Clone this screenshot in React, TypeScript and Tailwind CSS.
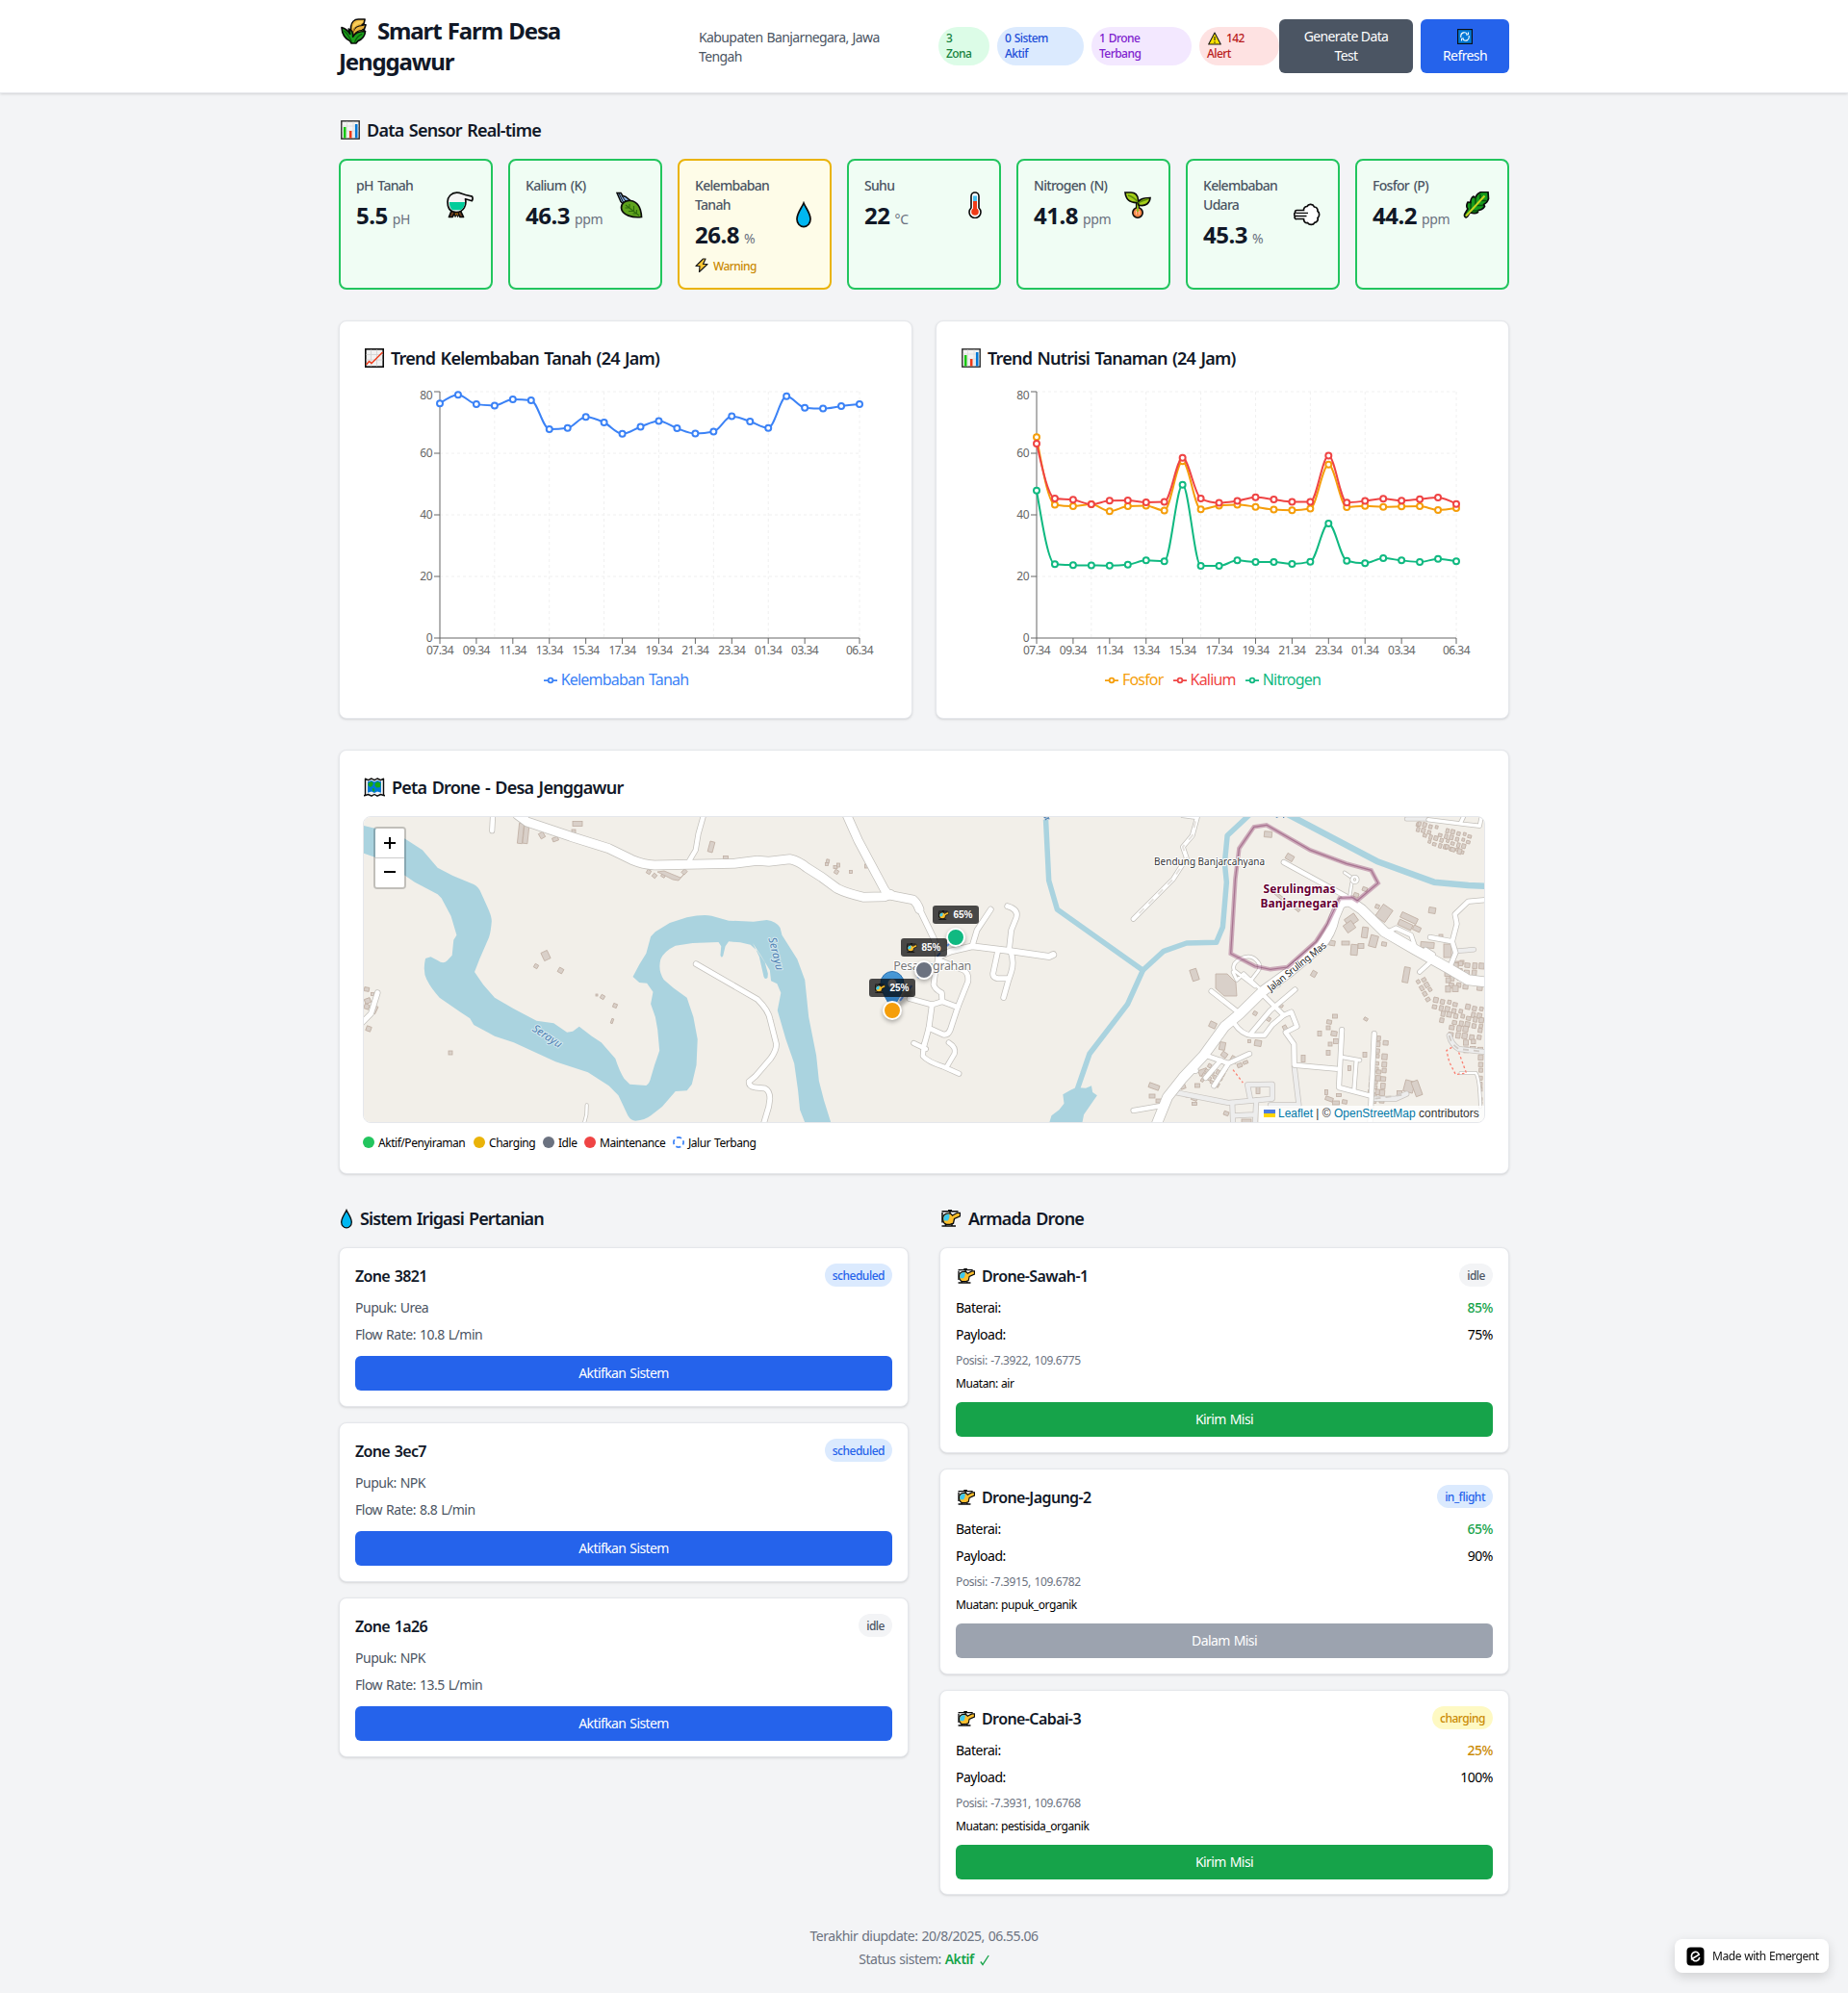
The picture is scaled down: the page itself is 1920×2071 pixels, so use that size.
import React from "react";

/* ---------- Icons ---------- */

type IconProps = { className?: string };
const K = "#0b0b0b";

const Wheat = ({ className }: IconProps) => (
  <svg viewBox="0 0 28 28" className={className} fill="none" strokeLinejoin="round">
    <path d="M13 26C11.500 20 10.500 14 11 9c.5-4.500 3.500-8 8-8h7l-1 4.500-2 1.500h4l-1.500 4.500-2 1h2l-2 4-7.500 2.500-2 6z" fill="#e9b13c" stroke={K} strokeWidth="1.700" />
    <path d="M12.500 11C13 6 15.500 2.500 24.500 2.500L23 5.500c-4 .5-7 1.500-9 6z" fill="#f9cf5a" />
    <path d="M13.500 14.500C15 9.500 18 7.500 24.500 7.800M15 17.500c1.500-3 3.500-4.500 8-4.500" stroke={K} strokeWidth="1.200" />
    <path d="M13.500 26C13 19 13 14 15 10" stroke="#a8781e" strokeWidth="1.300" />
    <path d="M1 10c4.500 1 7 3.500 9 7 0-2.500-.8-3.500-1.500-5.500 3 1 5 4.500 4.700 8.500C15 16 20 14 26.500 14c-.5 6-4 9-8 10.500L16.500 27h-5l-1.500-2.500C5 22 1.500 18 1 10z" fill="#1c9f1c" stroke={K} strokeWidth="1.700" />
    <path d="M3.500 13.500c4 3 6 7 8.500 12M15 26c1.500-4.500 4-7.500 8-9" stroke="#0a5c0a" strokeWidth="1.200" />
  </svg>
);

const BarChart = ({ className }: IconProps) => (
  <svg viewBox="0 0 20 20" className={className} fill="none">
    <rect x="0.800" y="0.800" width="18.400" height="18.400" fill="#f3f3f3" stroke="#2a2a2a" strokeWidth="1.400" />
    <path d="M1.500 6h17M1.500 11h17M6.500 1.500v17M13 1.500v17" stroke="#dcdcdc" strokeWidth="0.800" />
    <path d="M4.200 18.500V7" stroke="#16c60c" strokeWidth="2.600" />
    <path d="M10.200 18.500V11" stroke="#f03a17" strokeWidth="2.600" />
    <path d="M16.200 18.500V4" stroke="#0078d7" strokeWidth="2.600" />
  </svg>
);

const TrendChart = ({ className }: IconProps) => (
  <svg viewBox="0 0 20 20" className={className} fill="none">
    <rect x="0.800" y="0.800" width="18.400" height="18.400" fill="#f1f1f1" stroke={K} strokeWidth="1.600" />
    <path d="M1.500 6.500h17M1.500 12h17M6.500 1.500v17M12.500 1.500v17" stroke="#d2d2d2" strokeWidth="0.900" />
    <path d="M1.500 17l3-3.500 2.500 2L18.500 4" stroke="#f03a17" strokeWidth="1.400" />
  </svg>
);

const Alembic = ({ className }: IconProps) => (
  <svg viewBox="0 0 28 28" className={className} fill="none" strokeLinejoin="round">
    <path d="M5.500 19l-3 7.500h3.500l3-5M14 19l3.500 7.500h-3.500l-3-5" fill="#6b3f23" stroke={K} strokeWidth="1.700" />
    <path d="M8 22l1 4.500 1.200-3 1.300 3 1-4.500z" fill="#f4900c" stroke={K} strokeWidth="1" />
    <path d="M10.500 1.200c4 0 6 1.600 9 2.300l7 1.700c.8 1.300.7 3-.2 4.500L19.500 7.800c1.500 6-1.500 13.700-9.500 13.700S1 15.500 1 10.500 5 1.200 10.500 1.200z" fill="#f4f4f4" stroke={K} strokeWidth="1.700" />
    <path d="M2.800 11h16.200c0 4-2 7-4.500 8.300H6C3.800 17.500 2.800 14.500 2.800 11z" fill="#00cc9a" />
  </svg>
);

const Feather = ({ className }: IconProps) => (
  <svg viewBox="0 0 28 28" className={className} fill="none">
    <path d="M1 1.500l4 9 4 4 6-5-5-4-3-1-2-3z" fill="#8ab4e8" stroke={K} strokeWidth="1.500" />
    <path d="M3 2l5 10M6 4.500l5 7" stroke={K} strokeWidth="1" />
    <path d="M5.500 17C5.500 12 10 9 15 9.500c6 .8 11 6 11.500 17C18 27.500 6 25 5.500 17z" fill="#5fa31e" stroke={K} strokeWidth="1.700" />
    <path d="M10 14l14 11M14 13v4H9.500M18.500 15v5.500h-5.500M21.500 19v4H17.500" stroke="#2d6a0d" strokeWidth="1.100" />
  </svg>
);

const Drop = ({ className }: IconProps) => (
  <svg viewBox="0 0 18 28" className={className} fill="none">
    <path d="M9 2c2 5 7 10.500 7 16.500A7 7.800 0 0 1 9 26.600a7 7.800 0 0 1-7-8.100C2 12.500 7 7 9 2z" fill="#00b7f1" stroke={K} strokeWidth="1.700" />
  </svg>
);

const Thermometer = ({ className }: IconProps) => (
  <svg viewBox="0 0 14 28" className={className} fill="none">
    <path d="M3 17V5a4 4 0 0 1 8 0v12a6 6 0 1 1-8 0z" fill="#fff" stroke={K} strokeWidth="1.600" />
    <path d="M7 20V4.500" stroke="#4cc2f1" strokeWidth="4" />
    <path d="M7 20v-10" stroke="#f03a17" strokeWidth="4" />
    <circle cx="7" cy="21" r="3.800" fill="#f03a17" />
  </svg>
);

const Sprout = ({ className }: IconProps) => (
  <svg viewBox="0 0 28 28" className={className} fill="none">
    <path d="M14 22V12M14 14c3-2 5-2.500 8-3" stroke={K} strokeWidth="4.200" />
    <ellipse cx="14" cy="22" rx="5.200" ry="5.200" fill="#f7894a" stroke={K} strokeWidth="1.600" />
    <path d="M14 21V12" stroke="#8cbd18" strokeWidth="1.800" />
    <path d="M1 1h6c5 0 7 3 7.500 7.500l-.3 3C7 12 2 10 1 1zM14.500 13c0-4 3-6.500 12.500-6.500-.5 6-5 8.500-10 8-2 0-2.500-.5-2.500-1.500z" fill="#a4cf1b" stroke={K} strokeWidth="1.700" />
    <path d="M4 4c4 1 7 3 10 7M14.500 12c3-2 6-3 10-4" stroke="#5c8c0a" strokeWidth="1.300" />
    <path d="M12.500 20v4M15.500 20v4" stroke="#ffc39a" strokeWidth="1" />
  </svg>
);

const Wind = ({ className }: IconProps) => (
  <svg viewBox="0 0 28 24" className={className} fill="none">
    <path
      d="M10.500 7.500H3A1.500 1.500 0 0 0 2.300 10.300A1.600 1.600 0 0 0 2 13.500A1.600 1.600 0 0 0 3 16.500H10.500C10.500 19.500 12.500 21 14.500 20.500C16.500 23.300 20.500 23 21.800 20.300C24.500 20 25.700 17.500 25 15.500C27.300 13.500 27 9.800 25 8.500C25.300 6 23.500 3.800 21.500 4C20 .8 15.500 .5 14 3.500C12 3.500 10.300 5 10.500 7.500z"
      fill="#fff"
      stroke={K}
      strokeWidth="1.700"
    />
    <path d="M2.500 10.400H15M2.500 13.500H13.500" stroke={K} strokeWidth="1.300" />
  </svg>
);

const Herb = ({ className }: IconProps) => (
  <svg viewBox="0 0 28 28" className={className} fill="none">
    <path d="M3 27c-2-1-2-2-1-4l3-5c-2-2-1-5 0-7 1 0 2 0 3 1-.5-3 1-6 3-7l2 2c.500-3 3-5.500 6-6.500h7l.5 7c-1 3-3 5-5 6l1 2c-2 3-5 4-7 4l0 2c-3 2-6 1-8 0L4.500 26z" fill="#159a1c" stroke={K} strokeWidth="1.700" strokeLinejoin="round" />
    <path d="M8 20V12M8 20h8M13 14V6M13 14.500h8M18 9V3M18 9.500h6" stroke="#084f0c" strokeWidth="1.500" />
    <path d="M3 25.500L22.500 4.500" stroke="#c8d420" strokeWidth="2" />
  </svg>
);

const Bolt = ({ className }: IconProps) => (
  <svg viewBox="0 0 14 16" className={className} fill="none">
    <path d="M8.500 1L1 8.500h4L4.500 14.500 13 6.500H8.500L11 1z" fill="#fdc834" stroke="#1b1b1b" strokeWidth="1.200" strokeLinejoin="round" />
  </svg>
);

const Warn = ({ className }: IconProps) => (
  <svg viewBox="0 0 14 14" className={className} fill="none">
    <path d="M7 1L13.300 13H.700z" fill="#fce100" stroke="#1b1b1b" strokeWidth="1.100" strokeLinejoin="round" />
    <path d="M7 5v4M7 10.300v1.400" stroke="#1b1b1b" strokeWidth="1.100" />
  </svg>
);

const RefreshBox = ({ className }: IconProps) => (
  <svg viewBox="0 0 16 16" className={className} fill="none">
    <rect x="0.600" y="0.600" width="14.800" height="14.800" fill="#0078d7" stroke={K} strokeWidth="1.100" />
    <path d="M3.800 9V7a3.500 3.500 0 0 1 6.500-1.500M12.200 7v2a3.500 3.500 0 0 1-6.500 1.500" stroke="#fff" strokeWidth="1.100" />
    <path d="M11.500 3.500V6H9M4.500 12.500V10H7" stroke="#fff" strokeWidth="1" />
  </svg>
);

const MapIcon = ({ className }: IconProps) => (
  <svg viewBox="0 0 22 20" className={className} fill="none">
    <path d="M1.500 1.200l3 1.500L8 1l3 1.700L14 1l3.500 1.700 3-1.500v16.600l1 1-4-1.300-3.500 1.700-3-1.700-3 1.700-3.500-1.700-4 1.300 1-1z" fill="#f2f2f2" stroke={K} strokeWidth="1.400" strokeLinejoin="round" />
    <path d="M4 4.300L8 3l3 1.500L14 3l4 1.300v11.400L14 14.500 11 16l-3-1.500-4 1.200z" fill="#0078d7" />
    <path d="M4.500 6L8 4l2 2-1.500 3-2 1-2-2zM8.500 11.500l2-.5 1 2.500-1.500 1.500zM11.500 6l3-1.800L17.500 6l-.5 4-3.500.500-2-2z" fill="#16a815" />
  </svg>
);

const Heli = ({ className }: IconProps) => (
  <svg viewBox="0 0 20 18" className={className} fill="none">
    <path d="M0.500 1.800h17M7 .6h4" stroke={K} strokeWidth="1.500" />
    <path d="M1 3v10.500M9 1.500v3" stroke={K} strokeWidth="1.500" />
    <path d="M11.500 6l5-2.700h3v3.500L13.500 9.500l-1 4.700-3.500 1.200H5C3 14.500 1.500 12 1.600 9S4 3.800 8 3.800c1.800 0 2.800.8 3.500 2.200z" fill="#fdbf2d" stroke={K} strokeWidth="1.300" />
    <path d="M2.400 9C2.500 6.200 4.500 4.600 8.200 4.600c.6 2.600.3 4.900-1.500 6.800H3c-.5-.7-.6-1.500-.6-2.400z" fill="#3cc8f0" />
    <path d="M0.500 16.900h14.500M4.500 14.800v2M11 14.800v2" stroke={K} strokeWidth="1.500" />
  </svg>
);

/* ---------- Header ---------- */

const Header = () => (
  <header className="h-[97px] border-b border-gray-200 bg-white shadow-sm">
    <div className="mx-auto flex w-[1216px] items-center pt-4">
      <h1 className="w-[374px] text-2xl leading-8 font-bold tracking-[-0.047em] text-gray-900 [word-spacing:0.05em]">
        <span className="flex items-center">
          <Wheat className="mr-[11px] ml-[2px] size-[27px]" />
          Smart Farm Desa
        </span>
        Jenggawur
      </h1>
      <p className="w-[249px] pt-[2px] text-sm leading-5 tracking-[-0.043em] text-gray-600 [word-spacing:0.07em]">
        Kabupaten Banjarnegara, Jawa
        <br />
        Tengah
      </p>
      <div className="flex gap-2 text-xs leading-4 font-[550] tracking-[-0.046em] [word-spacing:0.07em]">
        <span className="w-[53px] rounded-full bg-green-100 px-2 py-1 text-green-700">
          3<br />Zona
        </span>
        <span className="w-[90px] rounded-full bg-blue-100 px-2 py-1 text-blue-700">
          0 Sistem
          <br />
          Aktif
        </span>
        <span className="w-[104px] rounded-full bg-purple-100 px-2 py-1 text-purple-700">
          1 Drone
          <br />
          Terbang
        </span>
        <span className="w-[83px] rounded-full bg-red-100 px-2 py-1 text-red-700">
          <span className="flex items-center gap-[5px]">
            <Warn className="ml-[1px] size-[14px]" />
            142
          </span>
          Alert
        </span>
      </div>
      <div className="flex gap-2 text-center text-sm leading-5 tracking-[-0.043em] text-white [word-spacing:0.07em]">
        <button className="h-14 w-[139px] rounded-md bg-gray-600">
          Generate Data
          <br />
          Test
        </button>
        <button className="flex h-14 w-[92px] flex-col items-center rounded-md bg-blue-600 pt-2">
          <span className="flex h-5 items-center">
            <RefreshBox className="size-4" />
          </span>
          Refresh
        </button>
      </div>
    </div>
  </header>
);

/* ---------- Sensors ---------- */

type Sensor = {
  label: string[];
  value: string;
  unit: string;
  Icon: (p: IconProps) => React.ReactElement;
  size: string;
  warn?: boolean;
};

const sensors: Sensor[] = [
  { label: ["pH Tanah"], value: "5.5", unit: "pH", Icon: Alembic, size: "size-[28px] mr-[2px]" },
  { label: ["Kalium (K)"], value: "46.3", unit: "ppm", Icon: Feather, size: "size-[28px] mr-[2px]" },
  { label: ["Kelembaban", "Tanah"], value: "26.8", unit: "%", Icon: Drop, size: "h-[28px] w-[18px] mr-[2px]", warn: true },
  { label: ["Suhu"], value: "22", unit: "°C", Icon: Thermometer, size: "h-[28px] w-[14px] mr-[2px]" },
  { label: ["Nitrogen (N)"], value: "41.8", unit: "ppm", Icon: Sprout, size: "size-[28px] mr-[2px]" },
  { label: ["Kelembaban", "Udara"], value: "45.3", unit: "%", Icon: Wind, size: "h-[24px] w-[28px] mr-[2px]" },
  { label: ["Fosfor (P)"], value: "44.2", unit: "ppm", Icon: Herb, size: "size-[28px] mr-[2px]" },
];

const SensorCard = ({ label, value, unit, Icon, size, warn }: Sensor) => (
  <div
    className={
      "h-[136px] rounded-lg border-2 p-4 " +
      (warn ? "border-[#eab308] bg-[#fefce8]" : "border-[#22c55e] bg-[#f0fdf4]")
    }
  >
    <div className="flex items-center justify-between">
      <div className="whitespace-nowrap">
        <p className="text-sm leading-5 font-[550] tracking-[-0.05em] text-gray-600 [word-spacing:0.12em]">
          {label.map((l) => (
            <span key={l} className="block">
              {l}
            </span>
          ))}
        </p>
        <p className="mt-[5px] -mb-px text-2xl leading-8 font-bold tracking-[-0.02em] text-gray-900">
          {value}
          <span className="ml-[5px] text-sm font-normal tracking-[-0.025em] text-gray-500">{unit}</span>
        </p>
      </div>
      <Icon className={"relative top-[2px] flex-none " + size} />
    </div>
    {warn && (
      <div className="mt-2 flex items-center gap-[5px] text-xs leading-4 font-[550] tracking-[-0.045em] text-yellow-600">
        <Bolt className="h-4 w-[14px]" />
        <span className="pt-[2px]">Warning</span>
      </div>
    )}
  </div>
);

/* ---------- Charts ---------- */

type Series = { name: string; color: string; data: number[] };

const moisture: Series[] = [
  {
    name: "Kelembaban Tanah",
    color: "#3b82f6",
    data: [76.2, 79, 75.9, 75.5, 77.5, 77.2, 67.8, 68.2, 71.8, 70, 66.3, 68.6, 70.5, 68.1, 66.4, 67, 72, 70.3, 68.2, 78.5, 74.8, 74.5, 75.3, 75.9],
  },
];

const nutrients: Series[] = [
  {
    name: "Fosfor",
    color: "#f59e0b",
    data: [65.2, 43.3, 42.8, 43.4, 41.2, 42.8, 43, 41.4, 57.4, 41.8, 43, 43.3, 42.6, 41.7, 41.5, 42, 56.3, 42.5, 42.9, 42.6, 42.7, 42.8, 41.6, 42.2],
  },
  {
    name: "Kalium",
    color: "#ef4444",
    data: [63.1, 45.3, 44.9, 43.4, 44.6, 44.7, 44.1, 44.2, 58.5, 45.3, 43.9, 44.5, 45.7, 45, 44.2, 44.2, 59.2, 44, 44.5, 45.2, 44.6, 45.1, 45.6, 43.5],
  },
  {
    name: "Nitrogen",
    color: "#10b981",
    data: [47.9, 24, 23.7, 23.6, 23.5, 23.8, 25.2, 24.9, 49.8, 23.4, 23.4, 25.2, 24.7, 24.7, 24.1, 24.8, 37.2, 25.1, 24.3, 25.9, 25.2, 24.7, 25.7, 24.9],
  },
];

const X0 = 80;
const X1 = 516;
const Y0 = 261;
const Y1 = 5;
const px = (i: number) => X0 + ((X1 - X0) * i) / 23;
const py = (v: number) => Y0 - ((Y0 - Y1) * v) / 80;

/* Monotone cubic interpolation in x */
function monotone(data: number[]) {
  const p = data.map((v, i) => [px(i), py(v)]);
  const n = p.length;
  const h = p[1][0] - p[0][0];
  const s = p.slice(1).map((q, i) => (q[1] - p[i][1]) / h);
  const t: number[] = new Array(n).fill(0);
  for (let i = 1; i < n - 1; i++) {
    const a = s[i - 1];
    const b = s[i];
    t[i] = (Math.sign(a) + Math.sign(b)) * Math.min(Math.abs(a), Math.abs(b), 0.5 * Math.abs((a + b) / 2)) || 0;
  }
  t[0] = (3 * s[0] - t[1]) / 2;
  t[n - 1] = (3 * s[n - 2] - t[n - 2]) / 2;
  let d = `M${p[0][0]},${p[0][1]}`;
  for (let i = 0; i < n - 1; i++) {
    d += `C${p[i][0] + h / 3},${p[i][1] + (t[i] * h) / 3},${p[i + 1][0] - h / 3},${p[i + 1][1] - (t[i + 1] * h) / 3},${p[i + 1][0]},${p[i + 1][1]}`;
  }
  return d;
}

const xTicks: [number, string][] = [
  [0, "07.34"], [2, "09.34"], [4, "11.34"], [6, "13.34"], [8, "15.34"], [10, "17.34"],
  [12, "19.34"], [14, "21.34"], [16, "23.34"], [18, "01.34"], [20, "03.34"], [23, "06.34"],
];

const Chart = ({ series }: { series: Series[] }) => (
  <div>
    <svg width="546" height="288" viewBox="0 0 546 288" className="block overflow-visible">
      <g stroke="#f0f0f0" strokeDasharray="3 3">
        {[20, 40, 60, 80].map((v) => (
          <path key={v} d={`M${X0} ${py(v)}H${X1}`} />
        ))}
        {[3, 6, 9, 12, 15, 18, 23].map((i) => (
          <path key={i} d={`M${px(i)} ${Y1}V${Y0}`} />
        ))}
      </g>
      <g stroke="#666">
        <path d={`M${X0} ${Y1}V${Y0}`} />
        <path d={`M${X0} ${Y0}H${X1}`} />
        {[0, 20, 40, 60, 80].map((v) => (
          <path key={v} d={`M${X0 - 6} ${py(v)}H${X0}`} />
        ))}
        {xTicks.map(([i]) => (
          <path key={i} d={`M${px(i)} ${Y0}v6`} />
        ))}
      </g>
      <g fill="#666" fontSize="12" letterSpacing="-0.5">
        {[0, 20, 40, 60].map((v) => (
          <text key={v} x="72" y={py(v) + 4.300} textAnchor="end">
            {v}
          </text>
        ))}
        <text x="72" y="13.300" textAnchor="end">80</text>
        {xTicks.map(([i, l]) => (
          <text key={i} x={px(i)} y="278.300" textAnchor="middle">
            {l}
          </text>
        ))}
      </g>
      {series.map((s) => (
        <g key={s.name} stroke={s.color} strokeWidth="2">
          <path d={monotone(s.data)} fill="none" />
          {s.data.map((v, i) => (
            <circle key={i} cx={px(i)} cy={py(v)} r="3" fill="#fff" />
          ))}
        </g>
      ))}
    </svg>
    <div className="mr-[20px] ml-[10px] flex h-[31px] items-center justify-center text-base tracking-[-0.05em] [word-spacing:0.08em]">
      {series.map((s) => (
        <span key={s.name} className="mr-[10px] flex items-center gap-1" style={{ color: s.color }}>
          <svg width="14" height="14" viewBox="0 0 32 32" fill="none" stroke="currentColor" strokeWidth="4" className="mt-[2px]">
            <path d="M0 16h10.667a5.333 5.333 0 1 1 10.667 0H32M21.333 16a5.333 5.333 0 1 1-10.667 0" />
          </svg>
          {s.name}
        </span>
      ))}
    </div>
  </div>
);

/* ---------- Map ---------- */

const RIVER =
  "M95,264L125,272L160,285L205,305L250,340L290,395L330,420L385,447Q398,455 404,473L420,515Q432,545 432,562Q430,595 425,612L400,680L387,720L410,760L440,800L490,835L550,872L595,880L630,908L645,905L662,890L695,920L720,940L757,990Q768,1030 780,1052L795,1070L838,1074Q848,1065 850,1050L860,1010L873,965L868,900L862,860L850,820L856,782L840,755L820,753L803,735L820,697L838,662L850,610L862,595L900,567L945,550Q985,540 1010,545L1055,560L1120,563L1155,558Q1180,562 1190,582L1195,605L1235,680L1255,745L1265,860L1285,980L1292,1060L1305,1120L1324,1192L1256,1192L1242,1150L1237,1090L1227,1005L1205,930L1183,840L1192,785L1182,757L1166,748L1163,715L1140,670L1118,630L1135,672L1147,735Q1150,745 1157,738L1158,725L1150,690L1130,655L1112,635L1085,628L1055,625L1046,640L1040,670Q1036,678 1033,668L1035,640L1028,627L960,630L915,638Q885,655 876,680Q868,715 885,745L910,770L945,800L962,860L973,930L970,1010L958,1070L945,1090L915,1092L880,1140L850,1168Q835,1182 810,1184Q798,1184 790,1168L765,1105L740,1075L685,1033L600,1000L490,940L440,920L385,885L375,865L350,845L295,800Q272,770 262,745Q250,720 258,678L272,673L290,684Q305,697 315,685L328,668L332,620L340,605L325,545L300,490L290,478L230,440L205,420L125,362L95,350Z";

type Road = [string, number, number]; // path, casing width, group

const roads: Road[] = [
  ["M435,235L433,280", 6, 0],
  ["M988,235L975,290L968,340L952,372", 6, 0],
  ["M969,695L1130,805Q1160,840 1164,870L1180,945Q1180,965 1165,990L1125,1045L1108,1062Q1108,1078 1125,1080L1150,1083Q1163,1090 1163,1115L1160,1140L1147,1192", 6.500, 0],
  ["M682,1135L681,1165L675,1192", 4, 0],
  ["M132,785L115,850L90,880", 6.500, 0],
  ["M190,30L255,42Q278,50 288,78L330,165L345,215", 7, 1],
  ["M345,222L385,205L450,190L560,203L690,222L703,216", 7.500, 1],
  ["M450,190L465,140L508,75", 6.500, 1],
  ["M560,65Q595,75 588,100L572,140L565,203", 6.500, 1],
  ["M530,205L515,275Q515,288 530,290L560,290", 6.500, 1],
  ["M570,205Q582,240 572,270L562,300L548,350", 6.500, 1],
  ["M345,222L350,235L425,265Q440,275 437,300L405,380L382,450Q375,468 360,465L315,445", 6.500, 1],
  ["M345,225L335,270L330,310Q335,325 355,335L357,362", 6.500, 1],
  ["M255,353L325,372L357,362L405,380", 6.500, 1],
  ["M325,372L315,445L300,500", 6.500, 1],
  ["M0,945L-3,982Q10,1000 50,1015L92,1037", 6, 2],
  ["M-27,942L5,960M65,940Q85,955 80,975L60,1015", 6, 2],
  ["M945,378L1110,485", 6, 2],
  ["M1105,410L1122,424M1118,488L1124,442", 4, 2],
  ["M680,232L718,238L705,295L680,330L690,365L655,430L550,555", 5.500, 2],
  ["M870,765L815,715Q808,695 830,680Q860,660 878,690Q888,705 875,722L860,745M885,775L840,725L822,745L812,720", 4.500, 2],
  ["M755,780L825,845", 6, 2],
  ["M975,775L910,840L860,910M890,790L945,855L965,845L980,890L950,908L972,945L973,1010L1085,1022", 6, 2],
  ["M815,880Q835,915 860,917L895,917L915,885L945,855", 6, 2],
  ["M1098,900L1090,1080L1170,1105M1183,912L1172,1192", 6, 2],
  ["M1095,985L1145,995M1136,995L1130,1090", 5, 2],
  ["M740,980L800,1005L855,975M780,995L740,1050M800,1005L762,1075", 6, 2],
  ["M550,1152L620,1138", 6, 2],
  ["M1480,495L1430,500L1395,540L1400,570L1388,625L1330,612M1388,625L1397,660L1385,695", 6, 2],
  ["M1225,592L1240,583L1280,605L1290,640M1318,650L1338,665L1330,690L1302,720", 5.500, 2],
  ["M1325,245L1460,265L1465,235M1410,255L1418,235", 5, 2],
  ["M1410,1035L1450,1035Q1460,1050 1462,1140", 4, 2],
  ["M500,230L525,252L640,298L740,335L800,370Q830,385 860,387L950,385L1070,382L1130,373L1160,376L1215,368Q1240,375 1260,395L1300,425L1340,460Q1365,475 1410,487L1465,485L1480,478", 10.500, 0],
  ["M1365,230L1395,310L1465,465L1475,480L1540,495Q1550,505 1556,525", 10, 0],
  ["M612,1192L640,1110L680,1050L735,980L790,890L830,850L890,780L960,720L1040,640Q1070,600 1078,550L1092,510Q1105,495 1122,502L1150,525L1210,595L1290,650L1380,710L1430,745L1480,752", 11.500, 2],
  ["M890,775L930,760M690,1030L715,1028", 6, 2],
];

const greyRoads: Road[] = [
  ["M650,1093L800,1128L915,1115L915,1070L850,1072L858,1120", 6, 2],
  ["M810,1128L812,1192M873,1120L870,1192M815,1168L870,1165M910,1135L985,1135L973,1015", 6, 2],
  ["M1180,1115L1240,1115L1268,1100", 6, 2],
  ["M1400,655L1445,650", 5.500, 2],
  ["M1380,918Q1385,945 1405,960L1480,970", 6, 2],
  ["M1268,243L1320,243", 5, 2],
];

const groups = [
  "translate(-37 -78) scale(.39541 .33333)",
  "translate(483 72) scale(.33333)",
  "translate(583 -78) scale(.39541 .33333)",
];

/* x, y, width, height, rotation */
const buildings: [number, number, number, number, number][] = [
  [164, 18, 5, 21, 6], [169.500, 18, 5, 21, 6], [223, 8, 10, 5, 0], [219, 16, 4, 4, 0], [186, 20, 5, 6, -30], [200, 24, 6, 4, -20],
  [362, 32, 5, 11, 15], [377, 43, 5, 3, 0], [297, 58, 4, 4, 30], [303, 62, 4, 4, 40], [312, 62, 4, 3, 30], [334, 58, 5, 4, -45],
  [483, 47, 3, 4, 10], [482, 50, 3, 3, 0], [491, 53, 4, 3, 0], [494, 51, 3, 4, 0], [492, 58, 4, 4, 30], [507, 58, 3, 3, 0], [523, 52, 3, 4, 0],
  [190, 145, 7, 9, -25], [180, 156, 4, 4, 30], [205.500, 160.500, 5, 5, 30], [249, 188, 4, 4, 30], [243, 186, 2, 2, 0], [262, 197, 4, 4, 20], [259, 213, 2, 5, 20],
  [4, 180, 5, 4, 10], [5, 192, 6, 5, -20], [4, 198, 5, 5, 20], [12, 201, 5, 8, 25], [10, 185, 3, 3, 0], [6, 221, 5, 5, 20], [91, 246, 4, 4, 0],
  [940.500, 19, 8, 6, 5], [963, 43, 8, 6, 30], [953, 84, 14, 3, 40], [970, 96, 8, 3, 40], [1041, 76, 5, 4, 20], [1032, 82, 5, 4, 20],
  [864, 165, 7, 12, -18], [1061, 101, 12, 15, 35], [1054, 94, 4, 4, 20], [1111, 98, 7, 6, 10], [1087, 106, 18, 6, 25], [1083, 113, 15, 6, 25], [1095, 117, 8, 5, 25],
  [1027, 108, 12, 9, -35], [1025, 115, 10, 9, -35], [1041, 121, 6, 11, 8], [1050, 130, 8, 12, 15], [1007, 132, 6, 5, 10], [1021, 132, 8, 4, 0], [1030, 139, 7, 11, 5], [1037, 135, 6, 5, 0], [1061, 133, 5, 4, 10],
  [1106, 134, 14, 6, 5], [1127, 140, 8, 14, 0], [1120, 125, 4, 4, 0], [1084, 165, 6, 16, 10], [988, 164, 5, 6, 30], [1134, 155, 8, 8, 0], [1142, 152, 4, 4, 0],
  [883, 217, 7, 6, 25], [927, 205, 4, 4, 30], [941, 211, 4, 4, 30], [954, 197, 4, 3, 30], [930, 236, 7, 6, 10], [921, 234, 3, 3, 0], [958, 220, 4, 5, -30],
  [893, 239, 6, 8, 10], [895, 248, 6, 5, 35], [905, 253, 7, 6, 30], [911, 259, 5, 4, -20], [917, 256, 5, 3, -20],
  [977, 252, 4, 7, 0], [1010, 208, 5, 4, 0], [1004, 214, 5, 4, 10], [1003, 220, 4, 4, 0], [994, 226, 4, 5, 0], [1009, 226, 6, 5, 10], [1011, 234, 5, 5, 0], [1005, 237, 4, 4, 0], [1003, 246, 4, 5, 0], [1042, 211, 4, 3, 30], [1025, 262, 3, 5, 0], [1041, 248, 4, 5, 0],
  [873, 266, 9, 6, -20], [867, 280, 5, 4, 0], [822, 281, 11, 5, 20], [820, 291, 6, 4, 0], [827, 296, 6, 4, 0], [852, 281, 5, 5, -20], [864, 293, 6, 5, 20], [857, 290, 4, 4, 0], [864, 299, 5, 3, 0], [897, 309, 5, 4, 20], [930, 285, 4, 7, 0], [918, 317, 10, 4, 0],
  [1001, 287, 3, 5, 0], [1004, 294, 8, 4, 20], [1011, 298, 7, 4, 0], [1020, 297, 5, 4, 10], [1014, 290, 5, 3, 0], [1087, 281, 10, 12, 15], [1095, 283, 7, 16, -20], [1077, 288, 5, 5, 0],
];

/* Dense housing blocks: x, y, columns, rows, step, rotation */
const blocks: [number, number, number, number, number, number][] = [
  [1089, 4, 2, 1, 6, 16],
  [1096, 5, 10, 2, 6, 14],
  [1102, 17, 8, 2, 6, 16],
  [1124, 29, 4, 1, 7, 16],
  [879, 256, 2, 4, 6, 28],
  [893, 252, 2, 5, 6, 28],
  [1053, 228, 1, 11, 6.500, 4],
  [1060, 232, 1, 9, 7.500, 4],
  [1046, 262, 2, 4, 7, 4],
  [1130, 150, 5, 4, 7.500, 5],
  [1113, 188, 8, 2, 6.800, 12],
  [1120, 202, 7, 2, 6.800, 10],
  [1129, 216, 5, 2, 7.300, 8],
  [1093, 172, 2, 4, 6.600, -30],
  [1143, 232, 3, 2, 7.500, 0],
  [1159, 248, 1, 5, 7, 2],
  [1160, 282, 1, 4, 5, 0],
  [1124, 152, 2, 4, 8, 0],
];

const Housing = () => (
  <g fill="#d9d0c9" stroke="#c0afa3" strokeWidth="0.800">
    {buildings.map(([x, y, w, h, r], i) => (
      <rect key={i} x={x - w / 2} y={y - h / 2} width={w} height={h} transform={`rotate(${r} ${x} ${y})`} />
    ))}
    {blocks.map(([x, y, c, n, s, r], b) => (
      <g key={b} transform={`rotate(${r} ${x} ${y})`}>
        {Array.from({ length: c * n }, (_, k) => {
          const j = (k * 7 + b * 3) % 5;
          if ((k * 11 + b) % 9 === 0) return null;
          return (
            <rect
              key={k}
              x={x + (k % c) * s + j * 0.3}
              y={y + Math.floor(k / c) * s + ((j * 3) % 4) * 0.4}
              width={s - 2 - j * 0.3}
              height={s - 1.500 - ((j * 2) % 3) * 0.7}
            />
          );
        })}
      </g>
    ))}
    <path d="M306,58L313,57L330,64L334,60L328,67L322,66Z" />
    <path d="M886,164L898,164L907,173L908,187L895,187L886,179Z" />
  </g>
);

const Roads = ({ list, color, casing }: { list: Road[]; color: string; casing: string }) => (
  <g fill="none" strokeLinecap="round" strokeLinejoin="round">
    {list.map(([d, w, g], i) => (
      <path key={i} d={d} transform={groups[g]} vectorEffect="non-scaling-stroke" stroke={casing} strokeWidth={w} />
    ))}
    {list.map(([d, w, g], i) => (
      <path key={i} d={d} transform={groups[g]} vectorEffect="non-scaling-stroke" stroke={color} strokeWidth={w - 1.500} />
    ))}
  </g>
);

const ZOO = "M900,262L1015,340L1110,382L1175,403L1193,443L1138,498L1125,488L1092,490L1060,570L1030,625L955,705L910,712L870,702L806,663L818,430L828,335L867,268Z";

const MapTiles = () => (
  <svg viewBox="1 1 1164 317" width="1164" height="317" className="block bg-[#f2efe9]">
    <path d={RIVER} transform={groups[0]} fill="#aad3df" />
    <g transform={groups[2]} fill="none" stroke="#aad3df" strokeLinejoin="round">
      <path vectorEffect="non-scaling-stroke" strokeWidth="5.500" d="M320,245L328,435L350,525L575,715L535,820L435,975L403,1085" />
      <path vectorEffect="non-scaling-stroke" strokeWidth="5.500" d="M857,228L797,295L790,380L795,440L785,580L768,628L690,630L630,655L575,715" />
      <path vectorEffect="non-scaling-stroke" strokeWidth="6.500" d="M955,228L1190,375L1340,440L1430,450L1480,453" />
      <path fill="#aad3df" stroke="none" d="M365,1102L385,1088L400,1080L425,1082L440,1075L443,1095L455,1105L440,1130L420,1165L415,1195L328,1195L335,1168L355,1150L368,1130Z" />
    </g>
    <Housing />
    <Roads list={greyRoads} color="#ededed" casing="#c9c5c0" />
    <Roads list={roads} color="#ffffff" casing="#c3c0bb" />
    <circle cx="1030.500" cy="66" r="3" fill="#f2efe9" stroke="#c3c0bb" strokeWidth="4" />
    <circle cx="1030.500" cy="66" r="3" fill="none" stroke="#fff" strokeWidth="2.500" />
    <g fill="none" transform={groups[2]}>
      <path vectorEffect="non-scaling-stroke" d="M713,250L705,295L680,330L690,365L655,430L555,550" stroke="#e6e3df" strokeWidth="2" strokeDasharray="7 7" />
      <path vectorEffect="non-scaling-stroke" d="M1380,918Q1385,945 1405,960L1480,970M1185,1115L1265,1102" stroke="#cfcac5" strokeWidth="1.800" strokeDasharray="6 5" />
      <path vectorEffect="non-scaling-stroke" d="M1387,955L1373,965L1380,1000L1397,1040L1425,1035L1405,970M812,1025L838,1065" stroke="#fa8072" strokeWidth="1.300" strokeDasharray="2.500 2.500" />
      <path vectorEffect="non-scaling-stroke" d={ZOO} stroke="#8d3a6b" strokeOpacity=".38" strokeWidth="4.500" />
      <path vectorEffect="non-scaling-stroke" d={ZOO} stroke="#7d3060" strokeOpacity=".45" strokeWidth="1.200" />
      <path vectorEffect="non-scaling-stroke" d="M315,238L330,243M318,246L328,238M925,238L932,235M945,235V240" stroke="#4d80b3" strokeWidth="1.200" />
    </g>
    <g fontFamily="'Noto Sans', sans-serif" paintOrder="stroke" stroke="#ffffff" strokeWidth="2" strokeLinejoin="round" textAnchor="middle">
      <text fill="#4d80b3" fontSize="11.500" fontStyle="italic" textLength="34" transform="translate(189.500 232) rotate(33)" stroke="#d5e9ef">Serayu</text>
      <text fill="#4d80b3" fontSize="11.500" fontStyle="italic" textLength="35" transform="translate(425.500 144) rotate(76)" stroke="#d5e9ef">Serayu</text>
      <text x="591.800" y="160" fill="#777777" fontSize="12.500" textLength="81">Pesanggrahan</text>
      <text x="879.600" y="51" fill="#333333" fontSize="10" textLength="115">Bendung Banjarcahyana</text>
      <text x="973" y="80" fill="#660033" fontSize="12" fontWeight="700" textLength="75">Serulingmas</text>
      <text x="973" y="94.500" fill="#660033" fontSize="12" fontWeight="700" textLength="81">Banjarnegara</text>
      <text fill="#222222" fontSize="10" textLength="75" strokeWidth="1.500" transform="translate(972.500 159) rotate(-39)">Jalan Sruling Mas</text>
    </g>
    <path d="M550 202L583 160L615.700 125.700" fill="none" stroke="#3b82f6" strokeWidth="2" strokeDasharray="5 10" strokeOpacity=".8" strokeDashoffset="2" />
    <defs>
      <linearGradient id="pin" x1="0" y1="0" x2="0" y2="1">
        <stop offset="0" stopColor="#4a9bd8" />
        <stop offset="1" stopColor="#2a70b2" />
      </linearGradient>
      <filter id="soft" x="-50%" y="-50%" width="200%" height="200%">
        <feGaussianBlur stdDeviation="2" />
      </filter>
    </defs>
    <path d="M551 202L561 181Q570 176 572 183Q570 192 551 202Z" fill="#000" fillOpacity=".35" filter="url(#soft)" />
    <path d="M550 202C545.500 192 538 183 538 173.500A12 12 0 0 1 562 173.500C562 183 554.500 192 550 202Z" fill="url(#pin)" stroke="#2b6fae" />
    <circle cx="550" cy="174" r="4.500" fill="#fff" />
  </svg>
);

const drones = [
  { pct: "65%", dot: "left-[605px] top-[115px] bg-[#10b981]", tag: "left-[591px] top-[92px]" },
  { pct: "85%", dot: "left-[572px] top-[149px] bg-[#6b7280]", tag: "left-[558px] top-[126px]" },
  { pct: "25%", dot: "left-[539px] top-[191px] bg-[#f59e0b]", tag: "left-[525px] top-[168px]" },
];

const DroneMap = () => (
  <div className="relative h-[319px] w-[1166px] overflow-hidden rounded-lg border border-gray-200">
    <MapTiles />
    {drones.map((d) => (
      <div key={d.pct}>
        <span className={"absolute size-5 rounded-full border-2 border-white shadow-[0_2px_4px_rgba(0,0,0,0.3)] " + d.dot} />
        <span
          className={
            "absolute flex h-[19px] w-12 items-center justify-center gap-[4px] rounded-[3px] bg-black/70 font-['Liberation_Sans'] text-[10px] font-bold text-white " +
            d.tag
          }
        >
          <Heli className="h-[10px] w-[11px]" />
          {d.pct}
        </span>
      </div>
    ))}
    <div className="absolute top-[10px] left-[10px] w-[34px] rounded-[4px] border-2 border-black/20 bg-clip-padding">
      <div className="flex h-[31px] items-center justify-center rounded-t-[2px] border-b border-[#ccc] bg-white">
        <svg width="14" height="14" viewBox="0 0 14 14" stroke="#000" strokeWidth="2">
          <path d="M7 1v12M1 7h12" />
        </svg>
      </div>
      <div className="flex h-[30px] items-center justify-center rounded-b-[2px] bg-white">
        <svg width="14" height="14" viewBox="0 0 14 14" stroke="#000" strokeWidth="2">
          <path d="M1 6h12" />
        </svg>
      </div>
    </div>
    <div className="absolute right-0 bottom-0 flex h-[17px] w-[234px] items-center bg-white/80 pb-px pl-[5px] font-['Liberation_Sans'] text-xs whitespace-pre text-[#333]">
      <svg width="12" height="8" viewBox="0 0 12 8" className="mr-[3px]">
        <path fill="#4c7be1" d="M0 0h12v4H0z" />
        <path fill="#ffd500" d="M0 4h12v4H0z" />
      </svg>
      <span className="text-[#0078a8]">Leaflet</span> | © <span className="text-[#0078a8]">OpenStreetMap</span> contributors
    </div>
  </div>
);

const mapLegend = [
  { label: "Aktif/Penyiraman", dot: "bg-green-500", w: "w-[107px]" },
  { label: "Charging", dot: "bg-yellow-500", w: "w-[64px]" },
  { label: "Idle", dot: "bg-gray-500", w: "w-[35px]" },
  { label: "Maintenance", dot: "bg-red-500", w: "w-[84px]" },
];

/* ---------- Irrigation and drones ---------- */

const badge: Record<string, string> = {
  scheduled: "bg-blue-100 text-blue-600",
  in_flight: "bg-blue-100 text-blue-600",
  idle: "bg-gray-100 text-gray-600",
  charging: "bg-yellow-100 text-yellow-600",
};

const Badge = ({ status }: { status: string }) => (
  <span className={"flex h-6 items-center rounded-full px-2 pt-px text-xs font-[550] tracking-[-0.041em] " + badge[status]}>{status}</span>
);

const zones = [
  { name: "Zone 3821", status: "scheduled", pupuk: "Urea", flow: "10.8" },
  { name: "Zone 3ec7", status: "scheduled", pupuk: "NPK", flow: "8.8" },
  { name: "Zone 1a26", status: "idle", pupuk: "NPK", flow: "13.5" },
];

const fleet = [
  { name: "Drone-Sawah-1", status: "idle", bat: "85%", batCls: "text-green-600", load: "75%", pos: "-7.3922, 109.6775", cargo: "air", btn: "Kirim Misi", btnCls: "bg-green-600", h: "h-[214px]" },
  { name: "Drone-Jagung-2", status: "in_flight", bat: "65%", batCls: "text-green-600", load: "90%", pos: "-7.3915, 109.6782", cargo: "pupuk_organik", btn: "Dalam Misi", btnCls: "bg-gray-400", h: "h-[214px]" },
  { name: "Drone-Cabai-3", status: "charging", bat: "25%", batCls: "text-yellow-600", load: "100%", pos: "-7.3931, 109.6768", cargo: "pestisida_organik", btn: "Kirim Misi", btnCls: "bg-green-600", h: "h-[213px]" },
];

const card = "rounded-lg border border-gray-200 bg-white shadow-sm";
const heading = "flex h-7 items-center text-lg leading-7 font-semibold tracking-[-0.043em] text-gray-900 [word-spacing:0.08em]";
const action = "flex h-9 w-full items-center justify-center rounded-md text-sm tracking-[-0.043em] text-white [word-spacing:0.07em]";

export default function App() {
  return (
    <div
      className="min-h-[2071px] bg-[#f3f4f6] text-black [--color-blue-100:#dbeafe] [--color-blue-600:#2563eb] [--color-blue-700:#1d4ed8] [--color-gray-100:#f3f4f6] [--color-gray-200:#e5e7eb] [--color-gray-400:#9ca3af] [--color-gray-500:#6b7280] [--color-gray-600:#4b5563] [--color-gray-900:#111827] [--color-green-100:#dcfce7] [--color-green-500:#22c55e] [--color-green-600:#16a34a] [--color-green-700:#15803d] [--color-purple-100:#f3e8ff] [--color-purple-700:#7e22ce] [--color-red-100:#fee2e2] [--color-red-500:#ef4444] [--color-red-700:#b91c1c] [--color-yellow-100:#fef9c3] [--color-yellow-500:#eab308] [--color-yellow-600:#ca8a04]"
      style={{ fontFamily: "'Noto Sans', 'Open Sans', sans-serif" }}
    >
      <Header />
      <main className="mx-auto w-[1216px] pt-6">
        <h2 className={heading}>
          <BarChart className="mr-[7px] ml-[2px] size-5" />
          Data Sensor Real-time
        </h2>
        <section className="mt-4 grid grid-cols-7 gap-4">
          {sensors.map((s) => (
            <SensorCard key={s.label.join(" ")} {...s} />
          ))}
        </section>

        <section className="mt-8 grid grid-cols-2 gap-6">
          <div className={card + " h-[414px] p-6"}>
            <h3 className={heading + " mb-4"}>
              <TrendChart className="mr-[7px] ml-[2px] size-5" />
              Trend Kelembaban Tanah (24 Jam)
            </h3>
            <Chart series={moisture} />
          </div>
          <div className={card + " h-[414px] p-6"}>
            <h3 className={heading + " mb-4"}>
              <BarChart className="mr-[7px] ml-[2px] size-5" />
              Trend Nutrisi Tanaman (24 Jam)
            </h3>
            <Chart series={nutrients} />
          </div>
        </section>

        <section className={card + " mt-8 p-6"}>
          <h3 className={heading + " mb-4"}>
            <MapIcon className="mr-[7px] ml-[1px] h-5 w-[22px]" />
            Peta Drone - Desa Jenggawur
          </h3>
          <DroneMap />
          <div className="mt-3 flex h-4 items-center gap-2 text-xs leading-4 tracking-[-0.038em] whitespace-nowrap">
            {mapLegend.map((l) => (
              <span key={l.label} className={"flex items-center gap-1 " + l.w}>
                <i className={"size-3 flex-none rounded-full " + l.dot} />
                <span className="pt-[2px]">{l.label}</span>
              </span>
            ))}
            <span className="flex items-center gap-1">
              <svg width="12" height="12" viewBox="0 0 12 12" fill="none" stroke="#3b82f6" strokeWidth="1.700">
                <circle cx="6" cy="6" r="5.100" strokeDasharray="5.200 2.800" strokeDashoffset="2.600" />
              </svg>
              <span className="pt-[2px] [word-spacing:0.1em]">Jalur Terbang</span>
            </span>
          </div>
        </section>

        <section className="mt-8 grid grid-cols-2 items-start gap-8">
          <div>
            <h2 className={heading}>
              <Drop className="mr-[7px] ml-[1px] h-[21px] w-[14px]" />
              <span className="tracking-[-0.05em]">Sistem Irigasi Pertanian</span>
            </h2>
            <div className="mt-4 flex flex-col gap-4">
              {zones.map((z) => (
                <div key={z.name} className={card + " p-4"}>
                  <div className="mb-3 flex h-6 items-center justify-between">
                    <h4 className="pt-px text-base leading-6 font-semibold tracking-[-0.042em] text-gray-900 [word-spacing:0.08em]">{z.name}</h4>
                    <Badge status={z.status} />
                  </div>
                  <p className="mb-2 text-sm leading-5 tracking-[-0.035em] text-gray-600 [word-spacing:0.06em]">Pupuk: {z.pupuk}</p>
                  <p className="mb-3 text-sm leading-5 tracking-[-0.035em] text-gray-600 [word-spacing:0.06em]">Flow Rate: {z.flow} L/min</p>
                  <button className={action + " bg-blue-600"}>Aktifkan Sistem</button>
                </div>
              ))}
            </div>
          </div>

          <div>
            <h2 className={heading}>
              <Heli className="mr-[8px] ml-[2px] h-[18px] w-5" />
              Armada Drone
            </h2>
            <div className="mt-4 flex flex-col gap-4">
              {fleet.map((d) => (
                <div key={d.name} className={card + " p-4 " + d.h}>
                  <div className="mb-3 flex h-6 items-center justify-between">
                    <h4 className="flex items-center pt-px text-base leading-6 font-semibold tracking-[-0.037em] text-gray-900">
                      <Heli className="mr-[7px] ml-[2px] h-4 w-[18px]" />
                      {d.name}
                    </h4>
                    <Badge status={d.status} />
                  </div>
                  <div className="mb-2 flex justify-between text-sm leading-5 tracking-[-0.035em]">
                    <span>Baterai:</span>
                    <span className={"font-[550] " + d.batCls}>{d.bat}</span>
                  </div>
                  <div className="mb-2 flex justify-between text-sm leading-5 tracking-[-0.035em]">
                    <span>Payload:</span>
                    <span>{d.load}</span>
                  </div>
                  <p className="mb-2 pt-px text-xs leading-4 tracking-[-0.032em] text-gray-500 [word-spacing:0.07em]">Posisi: {d.pos}</p>
                  <p className="mb-[11px] text-xs leading-4 tracking-[-0.036em] [word-spacing:0.05em]">Muatan: {d.cargo}</p>
                  <button className={action + " " + d.btnCls}>{d.btn}</button>
                </div>
              ))}
            </div>
          </div>
        </section>

        <footer className="mt-8 text-center text-sm leading-5 tracking-[-0.034em] text-gray-500 [word-spacing:0.05em]">
          <p className="pt-px">Terakhir diupdate: 20/8/2025, 06.55.06</p>
          <p className="mt-1">
            Status sistem: <span className="font-semibold text-green-600">Aktif</span>{" "}
            <svg width="10" height="12" viewBox="0 0 10 12" fill="none" stroke="#16a34a" strokeWidth="1.300" className="ml-[2px] inline">
              <path d="M0.800 7.500L3 10.500L9.200 1" />
            </svg>
          </p>
        </footer>
      </main>

      <a className="fixed right-5 bottom-[21px] flex h-[35px] w-40 items-center rounded-lg bg-white pl-3 text-xs tracking-[-0.038em] text-[#111] shadow-[0_4px_12px_rgba(0,0,0,0.15)] [word-spacing:0.05em]">
        <svg width="19" height="20" viewBox="0 0 19 20" className="mr-2">
          <rect x="0.500" y="0.500" width="18" height="19" rx="4" fill="#000" />
          <path d="M5.500 12.800L13.200 8.200C12.500 6 10.800 5 9 5.300C6.500 5.700 5 8 5.500 10.800C6 13.800 9 15.600 11.500 14.300C12.600 13.800 13.300 12.800 13.600 11.500" fill="none" stroke="#fff" strokeWidth="1.700" strokeLinecap="round" />
        </svg>
        Made with Emergent
      </a>
    </div>
  );
}
